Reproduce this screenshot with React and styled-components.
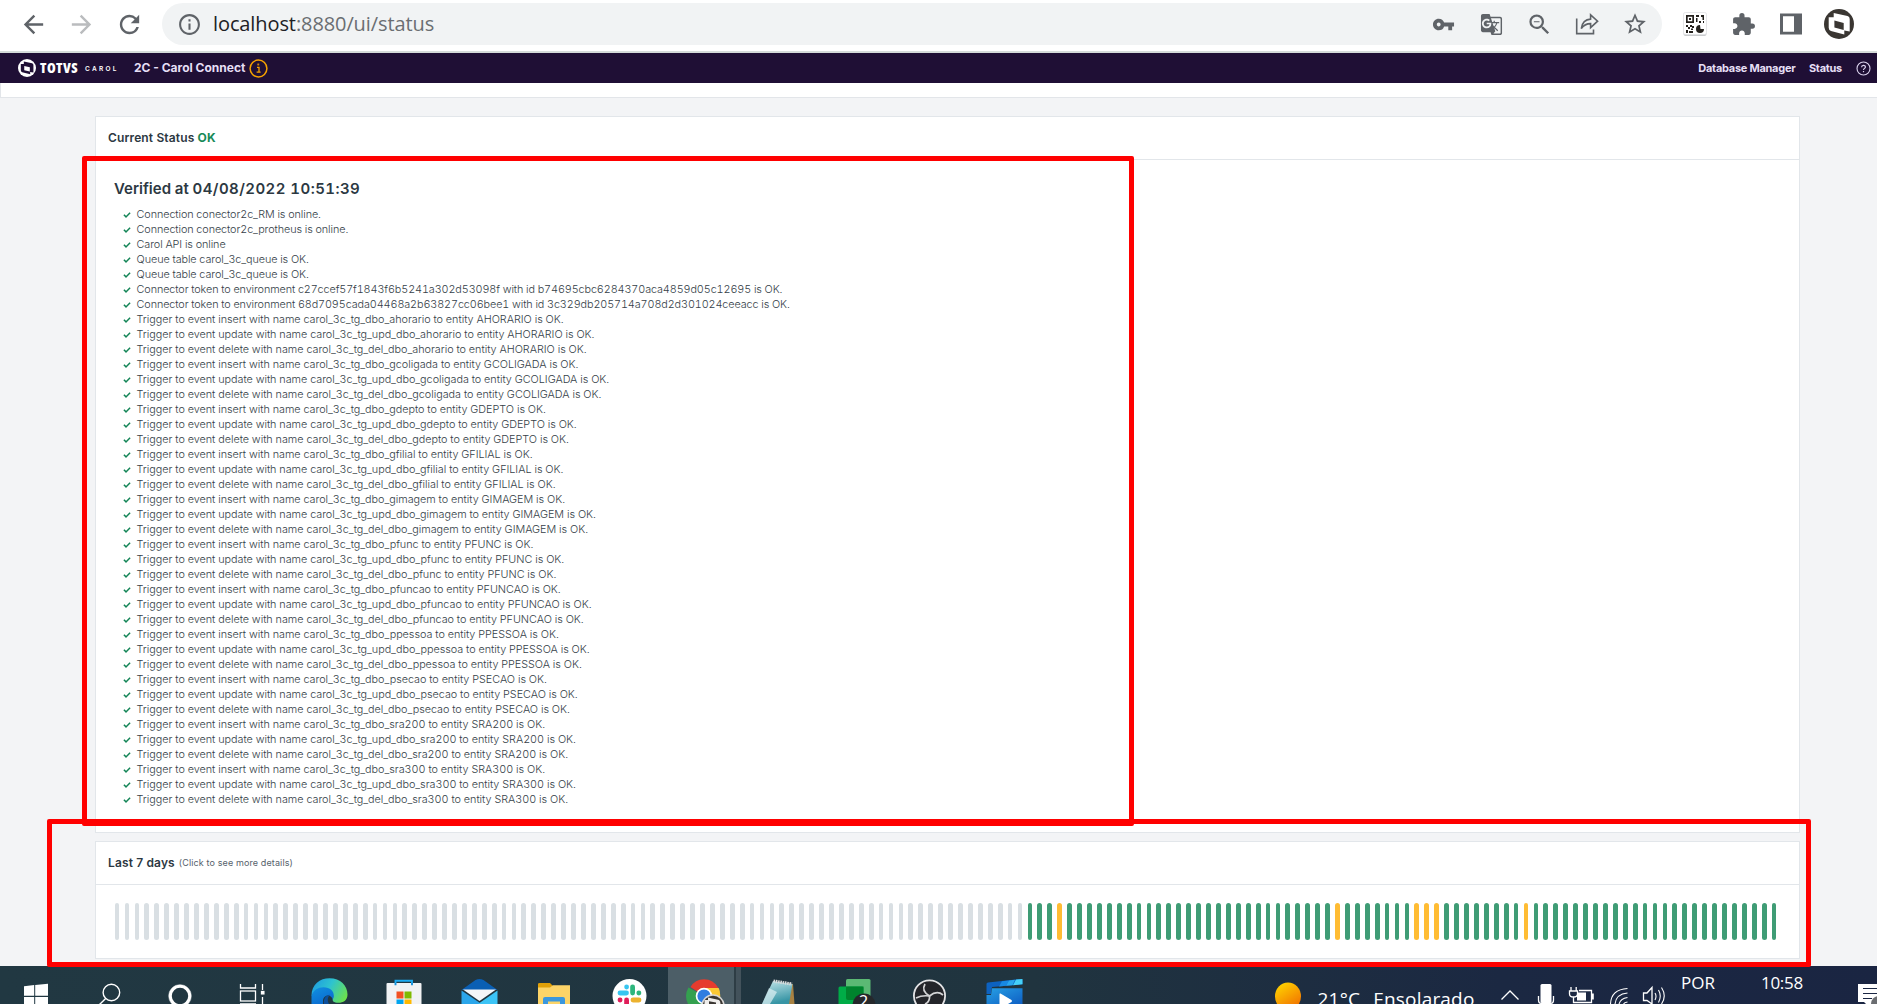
import React from 'react';
import styled, { createGlobalStyle } from 'styled-components';
import {
  MdArrowBack,
  MdArrowForward,
  MdRefresh,
  MdInfoOutline,
  MdVpnKey,
  MdGTranslate,
  MdZoomOut,
  MdStarOutline,
  MdExtension,
} from 'react-icons/md';

const entities = [
  'ahorario',
  'gcoligada',
  'gdepto',
  'gfilial',
  'gimagem',
  'pfunc',
  'pfuncao',
  'ppessoa',
  'psecao',
  'sra200',
  'sra300',
];

const triggers = [
  { event: 'insert', prefix: 'carol_3c_tg_dbo_' },
  { event: 'update', prefix: 'carol_3c_tg_upd_dbo_' },
  { event: 'delete', prefix: 'carol_3c_tg_del_dbo_' },
];

const checks = [
  { kind: 'connection', text: 'Connection conector2c_RM is online.' },
  { kind: 'connection', text: 'Connection conector2c_protheus is online.' },
  { kind: 'connection', text: 'Carol API is online' },
  { kind: 'connection', text: 'Queue table carol_3c_queue is OK.' },
  { kind: 'connection', text: 'Queue table carol_3c_queue is OK.' },
  {
    kind: 'token',
    text: 'Connector token to environment c27ccef57f1843f6b5241a302d53098f with id b74695cbc6284370aca4859d05c12695 is OK.',
  },
  {
    kind: 'token',
    text: 'Connector token to environment 68d7095cada04468a2b63827cc06bee1 with id 3c329db205714a708d2d301024ceeacc is OK.',
  },
  ...entities.flatMap((name) =>
    triggers.map(({ event, prefix }) => ({
      kind: 'trigger',
      text: `Trigger to event ${event} with name ${prefix}${name} to entity ${name.toUpperCase()} is OK.`,
    }))
  ),
];

const letterSpacings = {
  connection: '-0.08px',
  token: '-0.09px',
  trigger: '-0.015px',
};

// One bar per hour, 7 * 24
const warningHours = [95, 123, 131, 132, 133, 142];
const hours = Array.from({ length: 168 }, (_, i) => {
  if (i < 92) return 'empty';
  return warningHours.includes(i) ? 'warning' : 'ok';
});

const barColors = {
  empty: '#d9dfe3',
  ok: '#3f9c75',
  warning: '#ffbc33',
};

const TotvsMark = ({ size, disc, band }) => (
  <svg width={size} height={size} viewBox="0 0 30 30">
    <circle cx="15" cy="15" r="15" fill={disc} />
    <path
      d="M4.7 8.2 H9.7 V4 L23.5 7 Q25.7 7.6 25.7 10 V22.5 L20.3 21.6 V25.6 L7 22 Q4.7 21.2 4.7 18.8 Z"
      fill={band}
    />
    <path d="M10.4 11.6 L19.7 13.9 V20.9 L10.4 18.6 Z" fill={disc} />
  </svg>
);

const ShareIcon = () => (
  <svg width="24" height="24" viewBox="0 0 24 24" fill="none" stroke="#5f6368" strokeWidth="1.6">
    <path d="M1.7 6.5 V21.6 H18.5 V17.5" />
    <path d="M6.3 16.5 C7.2 10.5 10.5 7.3 15.6 7.1 V2.8 L22.6 9.2 L15.6 15.6 V11.6 C11.4 11.6 8.6 13.2 6.3 16.5 Z" />
  </svg>
);

const QrIcon = () => (
  <svg width="24" height="24" viewBox="0 0 24 24">
    <rect x="0.5" y="1.5" width="23" height="22.5" rx="2" fill="#c9cbcd" />
    <rect x="0.5" y="0.5" width="23" height="22" rx="1.8" fill="#fff" stroke="#dfe1e3" strokeWidth="0.8" />
    <g fill="#24211d">
      <path d="M3 3h8v8H3zM4.7 4.7v4.6h4.6V4.7z" fillRule="evenodd" />
      <rect x="6" y="6" width="2" height="2" />
      <path d="M13 3h3v2h-3zM13 6h1.5v4H13zM18 3h3v5h-1.5V5H18zM16 9h2v2h-2zM20 9h1v2h-1z" />
      <path d="M3 13h2v2H3zM7 13h2v2H7zM5 15h2v2H5zM9 14h2v2H9zM3 18h2v3H3zM6 19h4v2H6zM8 16.5h2v1.5H8z" />
      <path d="M17 13 A4 4 0 1 0 21 17 L17.5 17 Z" />
    </g>
  </svg>
);

const SidePanelIcon = () => (
  <svg width="22" height="22" viewBox="0 0 22 22">
    <path d="M0 0.5h22v21H0zM3 3.5v15h11v-15z" fill="#5f6368" fillRule="evenodd" />
    <rect x="3" y="3.5" width="11" height="15" fill="#fff" />
  </svg>
);

const Check = () => (
  <svg width="8" height="8" viewBox="0 0 8 8" fill="none" stroke="#148557" strokeWidth="1.5">
    <path d="M0.9 3.8 L3 5.9 L7.1 1.7" />
  </svg>
);

const NavInfo = () => (
  <svg width="19" height="19" viewBox="0 0 19 19" fill="none" stroke="#f5a100">
    <circle cx="9.5" cy="9.5" r="8.4" strokeWidth="1.5" />
    <path d="M8 8.4 H10 V13 M7.6 13.2 H11.6" strokeWidth="1.3" />
    <rect x="8.8" y="5" width="1" height="1" strokeWidth="0.8" />
  </svg>
);

const NavHelp = () => (
  <svg width="15" height="15" viewBox="0 0 15 15" fill="none" stroke="#dcd3ee">
    <circle cx="7.5" cy="7.5" r="6.5" strokeWidth="1.1" />
    <path d="M5.6 6.2 C5.6 3.7 9.4 3.7 9.4 6 C9.4 7.4 7.5 7.4 7.5 9" strokeWidth="1.2" />
    <path d="M7.5 10 V11.2" strokeWidth="1.2" />
  </svg>
);

// Taskbar drawings are 38px tall and run off the lower edge of the screen
const WindowsIcon = () => (
  <svg width="73" height="38" viewBox="0 0 73 38" fill="#fff">
    <path d="M24 20.3 L34.2 19.1 V29.8 H24 Z M35.2 18.9 L48 17.8 V29.8 H35.2 Z" />
    <path d="M24 31 H34.2 V38 H24 Z M35.2 31 H48 V38 H35.2 Z" />
  </svg>
);

const SearchIcon = () => (
  <svg width="73" height="38" viewBox="0 0 73 38" fill="none" stroke="#fff" strokeWidth="1.4">
    <circle cx="38.4" cy="26.5" r="8.3" />
    <path d="M32.7 32.6 L26.5 38.5" />
  </svg>
);

const CortanaIcon = () => (
  <svg width="73" height="38" viewBox="0 0 73 38" fill="none" stroke="#fff">
    <circle cx="34" cy="30" r="9.7" strokeWidth="3" />
    <circle cx="34" cy="30" r="11.4" strokeWidth="1" opacity="0.45" />
  </svg>
);

const TaskViewIcon = () => (
  <svg width="73" height="38" viewBox="0 0 73 38" fill="none" stroke="#fff" strokeWidth="1.3">
    <path d="M21.5 18 V22 H36.5 V18" />
    <rect x="21.5" y="25" width="15" height="10" />
    <path d="M21 38 H37 M43.5 18 V24 M43.5 31 V38" />
    <rect x="42.5" y="25.5" width="2.4" height="2.4" fill="#fff" />
  </svg>
);

const EdgeIcon = () => (
  <svg width="75" height="38" viewBox="0 0 75 38">
    <defs>
      <linearGradient id="edgeTop" x1="0" y1="0.3" x2="1" y2="0.7">
        <stop offset="0" stopColor="#1f9fe0" />
        <stop offset="0.45" stopColor="#2ec3cf" />
        <stop offset="1" stopColor="#6de24a" />
      </linearGradient>
      <linearGradient id="edgeBlue" x1="0" y1="0" x2="0.6" y2="1">
        <stop offset="0" stopColor="#1190e0" />
        <stop offset="1" stopColor="#0a6bd0" />
      </linearGradient>
    </defs>
    <path
      d="M19.5 30 C19.5 18 28 12.2 37.5 12.2 C48.5 12.2 55.5 19.5 55.5 28.5 C55.5 34.5 51 36.8 46.5 36.8 C41.5 36.8 40.2 35 40.8 33 C41.5 31 42 27 37 25 C29 22 23 24 19.5 30 Z"
      fill="url(#edgeTop)"
    />
    <path
      d="M19.5 38 V30 C21.5 24 26 21.3 31.5 21.3 C38 21.3 42 25 41.8 30 C41.6 32 40.8 33 40.8 34 C40 28 32 28 31 34 L31 38 Z"
      fill="url(#edgeBlue)"
    />
    <path d="M32 38 C31 33 34 29 38 28.8 C35 32 35.5 35 37 38 Z" fill="#0c4f9c" />
  </svg>
);

const StoreIcon = () => (
  <svg width="75" height="38" viewBox="0 0 75 38">
    <path d="M28.5 20 V14.7 H45 V20" fill="none" stroke="#1cabf2" strokeWidth="1.9" />
    <path d="M19.5 18 Q19.5 17 20.5 17 H53.5 Q54.5 17 54.5 18 V38 H19.5 Z" fill="#f1f2f4" />
    <path d="M28.5 17 V19.3 M45 17 V19.3" stroke="#1590dc" strokeWidth="1.9" />
    <rect x="29.5" y="25.5" width="7" height="7" fill="#f25022" />
    <rect x="37.5" y="25.5" width="7" height="7" fill="#7fba00" />
    <rect x="29.5" y="33.5" width="7" height="5" fill="#00a4ef" />
    <rect x="37.5" y="33.5" width="7" height="5" fill="#ffb900" />
  </svg>
);

const MailIcon = () => (
  <svg width="75" height="38" viewBox="0 0 75 38">
    <path d="M19.5 24 L33.5 14 Q37.5 12 41.5 14 L55.5 24 Z" fill="#0a5fb4" />
    <path d="M21 23.5 H54 L37.5 35 Z" fill="#f4f6f8" />
    <path d="M19.5 24.5 L38 37 V38 H19.5 Z" fill="#2ba6ea" />
    <path d="M55.5 24.5 L36 38 H55.5 Z" fill="#3cc4f6" />
  </svg>
);

const FolderIcon = () => (
  <svg width="75" height="38" viewBox="0 0 75 38">
    <path d="M21 18 Q21 17 22.5 17 H33 L36 20 H36 V23 H21 Z" fill="#e0a008" />
    <path d="M21 21.5 H33 L36 19.3 H53 V38 H21 Z" fill="#fcd468" />
    <path d="M26 38 V33 Q26 31 28 31 H46 Q48 31 48 33 V38 H43 V35.5 H31 V38 Z" fill="#3b97dd" />
  </svg>
);

const SlackIcon = () => (
  <svg width="75" height="38" viewBox="0 0 75 38" strokeWidth="4.8" strokeLinecap="round">
    <circle cx="37.5" cy="30" r="17" fill="#fff" />
    <path d="M34.6 21 V21.1" stroke="#36c5f0" />
    <path d="M28 27 H34.5" stroke="#36c5f0" />
    <path d="M40.6 20.8 V27" stroke="#2eb67d" />
    <path d="M46.8 27 H46.9" stroke="#2eb67d" />
    <path d="M28 34 H28.1 M34.6 34 V40" stroke="#e01e5a" />
    <path d="M41 34 H47" stroke="#ecb22e" />
  </svg>
);

const ChromeIcon = () => (
  <svg width="75" height="38" viewBox="0 0 75 38">
    <path d="M37 30 L21.5 21.5 A17.5 17.5 0 0 0 21 38 H37 Z" fill="#34a04f" />
    <path d="M37 30 L23.5 21 Q28 13.5 37 13.3 Q46.5 13.5 51.5 22 H37 Z" fill="#e63b2e" />
    <path d="M37 22 H51.7 Q53.2 25 53.2 29 V38 H37 Z" fill="#fcc934" />
    <circle cx="37" cy="30" r="8.3" fill="#fff" />
    <circle cx="37" cy="30" r="6.6" fill="#2f7de1" />
    <circle cx="46" cy="40" r="11.8" fill="#d8d6d4" />
    <circle cx="46" cy="40" r="10.2" fill="#3a3632" />
    <path d="M37.5 34 H41 V31.5 L52 34 Q53.5 35 53.5 38 H49 V36.5 L42 35.2 V38 H37.5 Z" fill="#f0eeec" />
  </svg>
);

const NotepadIcon = () => (
  <svg width="75" height="38" viewBox="0 0 75 38">
    <defs>
      <linearGradient id="notepad" x1="0" y1="0" x2="0.3" y2="1">
        <stop offset="0" stopColor="#c4e6ea" />
        <stop offset="1" stopColor="#3795a5" />
      </linearGradient>
    </defs>
    <path d="M31 16 L51 18 L52.5 38 H44 Z" fill="#a88242" />
    <path d="M31 15 L50.5 18 L47 38 H20 Z" fill="url(#notepad)" />
    <path d="M27 22 L35 26 L28 38 H20 Z" fill="#e0f1f3" opacity="0.7" />
    <path d="M31.5 15 L50 18" stroke="#d7dadb" strokeWidth="3.2" strokeDasharray="1.6 0.7" />
  </svg>
);

const MeetIcon = () => (
  <svg width="75" height="38" viewBox="0 0 75 38">
    <rect x="29" y="13" width="24.5" height="26" rx="1.5" fill="#5bb974" />
    <rect x="21.5" y="20.5" width="25" height="20" rx="1.5" fill="#00ac47" />
    <path d="M29 20.5 H46.5 V34 H31 Q29 34 29 32 Z" fill="#00832d" />
    <circle cx="47" cy="39" r="11.5" fill="#25282b" />
    <text x="42" y="41" fontFamily="Noto Sans, sans-serif" fontSize="16" fill="#fff">
      2
    </text>
  </svg>
);

const ObsIcon = () => (
  <svg width="75" height="38" viewBox="0 0 75 38">
    <circle cx="37.5" cy="30" r="15.6" fill="#24252a" stroke="#e3e3e5" strokeWidth="1.8" />
    <g fill="none" stroke="#d4d4d6" strokeWidth="1.7">
      <path d="M33 18 Q29 25 37.5 30 Q45 24 51 29" />
      <path d="M37.5 30 Q38 36 33 38 M24 32 Q30 29 37.5 30" />
    </g>
  </svg>
);

const MoviesIcon = () => (
  <svg width="75" height="38" viewBox="0 0 75 38">
    <defs>
      <linearGradient id="movies" x1="0" y1="0" x2="1" y2="1">
        <stop offset="0" stopColor="#27a0e4" />
        <stop offset="1" stopColor="#0e5fc4" />
      </linearGradient>
    </defs>
    <path d="M19.5 18 Q19.5 16.8 21 16.6 L54 13 Q55.5 13 55.5 15 V18.3 L25 21 L24 28 H19.5 Z" fill="#0d62c0" />
    <path d="M35 15.2 L42 14.4 L39 19.8 L32 20.6 Z" fill="#1889e2" />
    <path d="M42 14.4 L48 13.7 L45.5 19.2 L39 19.8 Z" fill="#29a7ee" />
    <path d="M49 13.6 L55.5 13 V18.3 L46 19.2 Z" fill="#45d0f8" />
    <path d="M25 22.2 H55.5 V38 H19.5 V29 H24 Z" fill="url(#movies)" />
    <path d="M32.5 28 Q32.5 27 33.5 27.6 L44.5 34 Q45.5 35 44.5 36 L41 38 H32.5 Z" fill="#fff" />
  </svg>
);

const SunIcon = () => (
  <svg width="26" height="38" viewBox="0 0 26 38">
    <defs>
      <linearGradient id="sun" x1="0.2" y1="0" x2="0.8" y2="1">
        <stop offset="0" stopColor="#ffd400" />
        <stop offset="1" stopColor="#f06a00" />
      </linearGradient>
    </defs>
    <ellipse cx="13" cy="30.5" rx="13" ry="14" fill="url(#sun)" />
  </svg>
);

// Chevron, microphone, battery, wifi and speaker
const TrayIcons = () => (
  <svg width="169" height="38" viewBox="0 0 169 38" fill="none" stroke="#fff" strokeWidth="1.3">
    <path d="M3.5 33.5 L12 25 L20.5 33.5" />
    <rect x="42.5" y="18" width="11" height="19" rx="1.5" fill="#fff" stroke="none" />
    <path d="M40.5 30 V34 Q40.5 37.3 43 37.3 H53 Q55.5 37.3 55.5 34 V30" />
    <path d="M73 21 V25 M78.2 21 V25 M71.5 25 H79.5 V28 Q79.5 31 75.5 31 Q71.5 31 71.5 28 Z M75.5 31 V36.5 H93.5 V24.5 H81" />
    <path d="M94.8 27.5 V33.5" strokeWidth="2" />
    <rect x="79" y="26.5" width="9" height="8" fill="#fff" stroke="none" />
    <path d="M112.5 38 Q113 23.5 129.5 22.5 M117 38 Q118 28 129.5 27 M121 38 Q122.5 32.5 129.5 31.5 M125.5 38 Q126.5 36.5 129.5 36" strokeWidth="1.1" />
    <path d="M145.5 27 H149 L154 21.5 V38 L149 34.5 H145.5 Z" />
    <path d="M157 27 Q159 30 157 34 M160.5 24 Q164 30 160.5 36.5 M163.5 21.5 Q169 30 163.5 38" strokeWidth="1.1" />
  </svg>
);

const NotificationIcon = () => (
  <svg width="19" height="38" viewBox="0 0 19 38">
    <path d="M0 18 H19 V38 H8 L6 36 H0 Z" fill="#fff" />
    <path d="M5 22.5 H19 M5 27.5 H19 M5 32.5 H14" stroke="#1b2744" strokeWidth="1.2" />
    <circle cx="21" cy="38" r="8" fill="#6b6d71" />
  </svg>
);

const pinnedApps = [
  EdgeIcon,
  StoreIcon,
  MailIcon,
  FolderIcon,
  SlackIcon,
  ChromeIcon,
  NotepadIcon,
  MeetIcon,
  ObsIcon,
  MoviesIcon,
];

const App = () => {
  return (
    <Screen>
      <GlobalStyle />
      <BrowserBar>
        <BrowserButton>
          <MdArrowBack />
        </BrowserButton>
        <BrowserButton $disabled>
          <MdArrowForward />
        </BrowserButton>
        <BrowserButton>
          <MdRefresh />
        </BrowserButton>
        <AddressBar>
          <MdInfoOutline size={25} />
          <Address>
            <span>localhost</span>:8880/ui/status
          </Address>
          <AddressActions>
            <MdVpnKey size={23} />
            <MdGTranslate size={23} />
            <MdZoomOut size={27} />
            <ShareIcon />
            <MdStarOutline size={26} />
          </AddressActions>
        </AddressBar>
        <Extensions>
          <QrIcon />
          <MdExtension size={25} />
          <SidePanelIcon />
          <TotvsMark size={30} disc="#3a3632" band="#fff" />
        </Extensions>
      </BrowserBar>

      <Nav>
        <TotvsMark size={18} disc="#fff" band="#1f0f35" />
        <Brand>TOTVS</Brand>
        <Product>CAROL</Product>
        <AppName>2C - Carol Connect</AppName>
        <NavInfo />
        <NavLinks>
          <NavLink>Database Manager</NavLink>
          <NavLink>Status</NavLink>
          <NavHelp />
        </NavLinks>
      </Nav>
      <SubHeader />

      <Page>
        <Card $height={717}>
          <CardHeader>
            <CardTitle>
              Current Status <StatusOk>OK</StatusOk>
            </CardTitle>
          </CardHeader>
          <CardBody>
            <VerifiedAt>
              Verified at <Timestamp>04/08/2022 10:51:39</Timestamp>
            </VerifiedAt>
            <CheckList>
              {checks.map(({ kind, text }, i) => (
                <CheckItem key={i} $kind={kind}>
                  <Check />
                  <span>{text}</span>
                </CheckItem>
              ))}
            </CheckList>
          </CardBody>
        </Card>

        <Card $height={118}>
          <CardHeader>
            <CardTitle>Last 7 days</CardTitle>
            <Hint>(Click to see more details)</Hint>
          </CardHeader>
          <Timeline>
            {hours.map((status, i) => (
              <HourBar key={i} $status={status} />
            ))}
          </Timeline>
        </Card>
      </Page>

      <Taskbar>
        <WindowsIcon />
        <SearchIcon />
        <CortanaIcon />
        <TaskViewIcon />
        {pinnedApps.map((Icon, i) => (
          <AppSlot key={i} $active={Icon === ChromeIcon}>
            <Icon />
          </AppSlot>
        ))}
        <Tray>
          <SunIcon />
          <Weather>
            <span>21°C</span>
            <span>Ensolarado</span>
          </Weather>
          <TrayIcons />
          <Language>POR</Language>
          <Clock>10:58</Clock>
          <NotificationIcon />
        </Tray>
      </Taskbar>

      <Highlight $left={82} $top={156} $width={1052} $height={670} />
      <Highlight $left={47} $top={819} $width={1764} $height={148} />
    </Screen>
  );
};

// Styled components
const GlobalStyle = createGlobalStyle`
  * {
    box-sizing: border-box;
  }

  body {
    margin: 0;
    overflow: hidden;
    font-family: Inter, 'Liberation Sans', sans-serif;
  }

  svg {
    display: block;
    flex-shrink: 0;
  }
`;

const Screen = styled.div`
  position: relative;
  display: flex;
  flex-direction: column;
  width: 1877px;
  height: 1004px;
  overflow: hidden;
  background-color: #f3f4f6;
`;

const BrowserBar = styled.div`
  display: flex;
  align-items: center;
  height: 53px;
  padding: 0 14px 3px 9px;
  background-color: #fff;
  border-bottom: 2px solid #d5dcda;
  color: #5f6368;
`;

const BrowserButton = styled.div`
  display: flex;
  justify-content: center;
  width: 48px;
  font-size: 29px;
  color: ${({ $disabled }) => ($disabled ? '#babcbe' : '#5f6368')};
`;

const AddressBar = styled.div`
  display: flex;
  flex-shrink: 0;
  align-items: center;
  width: 1500px;
  height: 42px;
  margin-left: 9px;
  padding: 0 14px 0 15px;
  border-radius: 21px;
  background-color: #f1f3f4;
`;

const Address = styled.div`
  margin-left: 11px;
  font-family: 'Open Sans', 'Noto Sans', sans-serif;
  font-size: 20px;
  line-height: 24px;
  letter-spacing: -0.1px;
  color: #6a6e72;

  span {
    color: #202124;
  }
`;

const AddressActions = styled.div`
  display: grid;
  grid-template-columns: repeat(5, 48px);
  align-items: center;
  justify-items: center;
  margin-left: auto;
  margin-right: -11px;
`;

const Extensions = styled.div`
  display: grid;
  grid-template-columns: repeat(4, 48px);
  align-items: center;
  justify-items: center;
  margin-left: 9px;
`;

const Nav = styled.div`
  display: flex;
  align-items: center;
  height: 30px;
  padding: 0 6.5px 0 18px;
  background-color: #1f0f35;
  color: #e6dff5;
`;

const Brand = styled.div`
  width: 41px;
  margin-left: 4px;
  padding-bottom: 1px;
  font-family: 'Open Sans', sans-serif;
  font-size: 14px;
  font-weight: 800;
  font-stretch: 85%;
  letter-spacing: 0.45px;
  color: #fff;
`;

const Product = styled.div`
  width: 49px;
  padding-left: 4px;
  padding-top: 1px;
  font-size: 6.5px;
  font-weight: 600;
  letter-spacing: 2.3px;
  color: #fff;
`;

const AppName = styled.div`
  width: 114px;
  margin-left: 4px;
  margin-right: 1px;
  padding-bottom: 1px;
  font-size: 12px;
  font-weight: 700;
  white-space: nowrap;
`;

const NavLinks = styled.div`
  display: flex;
  align-items: center;
  gap: 13.5px;
  margin-left: auto;
`;

const NavLink = styled.div`
  font-size: 11px;
  font-weight: 700;
  letter-spacing: -0.27px;
  white-space: nowrap;
`;

const SubHeader = styled.div`
  height: 15px;
  background-color: #fff;
  border: solid #e2e5e9;
  border-width: 0 0 1px 1px;
`;

const Page = styled.div`
  display: flex;
  flex-direction: column;
  gap: 8px;
  height: 868px;
  padding: 18px 77px 0 95px;
`;

const Card = styled.div`
  height: ${({ $height }) => $height}px;
  background-color: #fff;
  border: 1px solid #e2e6ea;
`;

const CardHeader = styled.div`
  display: flex;
  align-items: center;
  height: 43px;
  padding: 0 12px 2px;
  border-bottom: 1px solid #e2e6ea;
`;

const CardTitle = styled.div`
  font-size: 12px;
  font-weight: 600;
  letter-spacing: 0.14px;
  color: #2c3842;
`;

const StatusOk = styled.span`
  font-weight: 700;
  color: #178a58;
`;

const Hint = styled.div`
  margin-left: 4px;
  font-size: 9px;
  letter-spacing: 0.12px;
  color: #56616b;
`;

const CardBody = styled.div`
  padding: 19px 18px 0;
`;

const VerifiedAt = styled.div`
  font-size: 15px;
  font-weight: 600;
  line-height: 20px;
  color: #2c3842;
`;

const Timestamp = styled.span`
  font-variant-numeric: tabular-nums;
  letter-spacing: 0.44px;
`;

const CheckList = styled.div`
  display: flex;
  flex-direction: column;
  margin-top: 8px;
  padding-left: 9px;
`;

const CheckItem = styled.div`
  display: flex;
  align-items: center;
  gap: 5.6px;
  height: 15px;
  font-size: 10.8px;
  line-height: 15px;
  font-weight: 300;
  font-variant-numeric: tabular-nums;
  letter-spacing: ${({ $kind }) => letterSpacings[$kind]};
  color: #343e47;
  white-space: nowrap;
`;

const Timeline = styled.div`
  display: flex;
  justify-content: space-between;
  padding: 18px 22px 0 18.7px;
`;

const HourBar = styled.div`
  width: 4.8px;
  height: 37px;
  border-radius: 2.5px;
  background-color: ${({ $status }) => barColors[$status]};
`;

const Taskbar = styled.div`
  display: flex;
  height: 38px;
  background: linear-gradient(90deg, #213842 0%, #20343f 55%, #1b2842 80%, #1a2542 100%);
  color: #fff;
  font-family: 'Open Sans', 'Noto Sans', sans-serif;
`;

const AppSlot = styled.div`
  width: 75px;
  height: 38px;
  display: flex;
  justify-content: center;
  background: ${({ $active }) =>
    $active
      ? 'linear-gradient(90deg, transparent 1px, #4c5e67 1px, #4c5e67 67px, #2e3d45 67px, #2e3d45 69px, #43525b 69px, #43525b 74px, transparent 74px)'
      : 'none'};
`;

const Tray = styled.div`
  display: flex;
  margin-left: auto;
`;

const Weather = styled.div`
  display: flex;
  gap: 13px;
  width: 197px;
  padding: 20px 0 0 16.5px;
  font-size: 19px;
  line-height: 26px;
  letter-spacing: 0.2px;
  white-space: nowrap;
`;

const Language = styled.div`
  width: 80px;
  padding: 5px 0 0 14px;
  font-size: 17px;
  line-height: 24px;
`;

const Clock = styled.div`
  width: 111px;
  padding: 5px 0 0 14px;
  font-size: 17px;
  line-height: 24px;
  letter-spacing: -0.3px;
`;

// Red frames drawn over the screen
const Highlight = styled.div`
  position: absolute;
  left: ${({ $left }) => $left}px;
  top: ${({ $top }) => $top}px;
  width: ${({ $width }) => $width}px;
  height: ${({ $height }) => $height}px;
  border: 5px solid #ff0000;
  border-radius: 2px;
`;

export default App;
